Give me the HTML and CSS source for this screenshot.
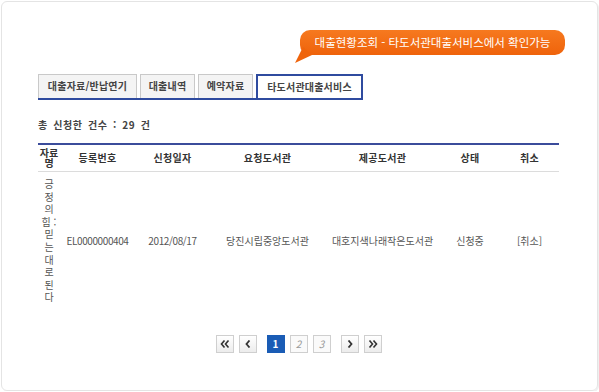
FILE: index.html
```html
<!DOCTYPE html>
<html lang="ko">
<head>
    <meta charset="UTF-8">
    <title>대출현황조회</title>
    <link rel="stylesheet" href="styles.css">
</head>
<body>
    <div class="frame">
        <div class="bubble">대출현황조회 - 타도서관대출서비스에서 확인가능</div>

        <ul class="tabs">
            <li class="tab tab-wide">대출자료/반납연기</li>
            <li class="tab">대출내역</li>
            <li class="tab">예약자료</li>
            <li class="tab tab-active">타도서관대출서비스</li>
        </ul>

        <p class="summary">총 신청한 건수 : 29 건</p>

        <table class="list">
            <colgroup>
                <col style="width:22px">
                <col style="width:75px">
                <col style="width:75px">
                <col style="width:115px">
                <col style="width:115px">
                <col style="width:60px">
                <col>
            </colgroup>
            <thead>
                <tr>
                    <th class="col-title">자료명</th>
                    <th>등록번호</th>
                    <th>신청일자</th>
                    <th>요청도서관</th>
                    <th>제공도서관</th>
                    <th>상태</th>
                    <th>취소</th>
                </tr>
            </thead>
            <tbody>
                <tr>
                    <td class="col-title">긍정의 힘 : 믿는대로된다</td>
                    <td class="code">EL0000000404</td>
                    <td class="code">2012/08/17</td>
                    <td>당진시립중앙도서관</td>
                    <td>대호지색나래작은도서관</td>
                    <td>신청중</td>
                    <td>[취소]</td>
                </tr>
            </tbody>
        </table>

        <div class="paging">
            <div class="group">
                <a class="page-btn" href="#">
                    <svg width="10" height="8" viewBox="0 0 10 8"><polyline points="4.5,0.5 1.5,4 4.5,7.5" fill="none" stroke="#333" stroke-width="1.6"/><polyline points="8.5,0.5 5.5,4 8.5,7.5" fill="none" stroke="#333" stroke-width="1.6"/></svg>
                </a>
                <a class="page-btn" href="#">
                    <svg width="6" height="8" viewBox="0 0 6 8"><polyline points="4.5,0.5 1.5,4 4.5,7.5" fill="none" stroke="#333" stroke-width="1.8"/></svg>
                </a>
            </div>
            <div class="group">
                <a class="page-btn page-current" href="#">1</a>
                <a class="page-btn page-num" href="#">2</a>
                <a class="page-btn page-num" href="#">3</a>
            </div>
            <div class="group">
                <a class="page-btn" href="#">
                    <svg width="6" height="8" viewBox="0 0 6 8"><polyline points="1.5,0.5 4.5,4 1.5,7.5" fill="none" stroke="#333" stroke-width="1.8"/></svg>
                </a>
                <a class="page-btn" href="#">
                    <svg width="10" height="8" viewBox="0 0 10 8"><polyline points="1.5,0.5 4.5,4 1.5,7.5" fill="none" stroke="#333" stroke-width="1.6"/><polyline points="5.5,0.5 8.5,4 5.5,7.5" fill="none" stroke="#333" stroke-width="1.6"/></svg>
                </a>
            </div>
        </div>
    </div>
</body>
</html>
```

FILE: styles.css
```css
body {
    margin: 0;
    background-color: #fff;
    font-family: "Noto Sans CJK KR", "Noto Sans", sans-serif;
    color: #333;
}
.frame {
    box-sizing: border-box;
    width: 597px;
    height: 390px;
    margin: 1px 0 0 1px;
    padding: 28px 38px 0 36px;
    border: 1px solid #e4e4e4;
    border-radius: 6px;
    box-shadow: 1px 1px 0 #efefef;
    display: flex;
    flex-direction: column;
}
.bubble {
    position: relative;
    align-self: flex-end;
    margin-right: -6px;
    width: 265px;
    height: 25px;
    line-height: 25px;
    border-radius: 10px;
    background: linear-gradient(#f6791f, #ef630b);
    color: #fff;
    font-size: 11.5px;
    text-align: center;
    letter-spacing: 0;
}
.bubble::after {
    content: "";
    position: absolute;
    left: -6px;
    top: 17px;
    width: 18px;
    height: 16px;
    background-color: #ef640c;
    clip-path: polygon(9px 0, 18px 8px, 1px 16px);
}
.tabs {
    list-style: none;
    margin: 19px 0 0;
    padding: 0;
    display: flex;
    align-items: flex-end;
    gap: 3px;
    align-self: flex-start;
    border-bottom: 2px solid #2f4b9f;
}
.tab {
    box-sizing: border-box;
    width: 55px;
    height: 24px;
    line-height: 22px;
    border: 1px solid #c9c9c9;
    border-bottom: none;
    background-color: #f4f4f4;
    font-size: 10px;
    font-weight: bold;
    color: #444;
    text-align: center;
    letter-spacing: 0.2px;
}
.tab-wide {
    width: 99px;
}
.tab-active {
    width: 107px;
    border: 2px solid #2f4b9f;
    border-bottom: none;
    background-color: #fff;
    line-height: 22px;
}
.summary {
    margin: 19px 0 0;
    font-size: 10px;
    font-weight: bold;
    line-height: 12px;
    letter-spacing: 0.6px;
    word-spacing: 2px;
    color: #444;
}
.list {
    margin-top: 12px;
    width: 100%;
    table-layout: fixed;
    border-collapse: collapse;
    border-top: 2px solid #3b4c9b;
    font-size: 10px;
}
.list th {
    height: 26px;
    padding: 0;
    border-bottom: 1px solid #dcdcdc;
    font-weight: bold;
    color: #333;
    text-align: center;
    line-height: 10px;
    letter-spacing: 0.3px;
}
.list th.col-title {
    padding: 0;
    letter-spacing: 0;
}
.list td {
    padding: 5px 0 4px;
    text-align: center;
    color: #555;
    vertical-align: middle;
}
.list td.code {
    letter-spacing: -0.4px;
}
.list td.col-title {
    padding: 6px 2px 4px;
    line-height: 12.6px;
    word-break: break-all;
}
.paging {
    margin-top: 27px;
    display: flex;
    justify-content: center;
    gap: 10px;
}
.group {
    display: flex;
    gap: 5px;
}
.page-btn {
    box-sizing: border-box;
    width: 18px;
    height: 18px;
    display: flex;
    align-items: center;
    justify-content: center;
    border: 1px solid #cfcfcf;
    background: linear-gradient(#fff, #ececec);
    font-size: 10px;
    text-decoration: none;
    color: #999;
}
.page-num {
    font-style: italic;
    background: #fafafa;
}
.page-current {
    background: #1a5cb5;
    border-color: #1a5cb5;
    color: #fff;
    font-weight: bold;
}
```
